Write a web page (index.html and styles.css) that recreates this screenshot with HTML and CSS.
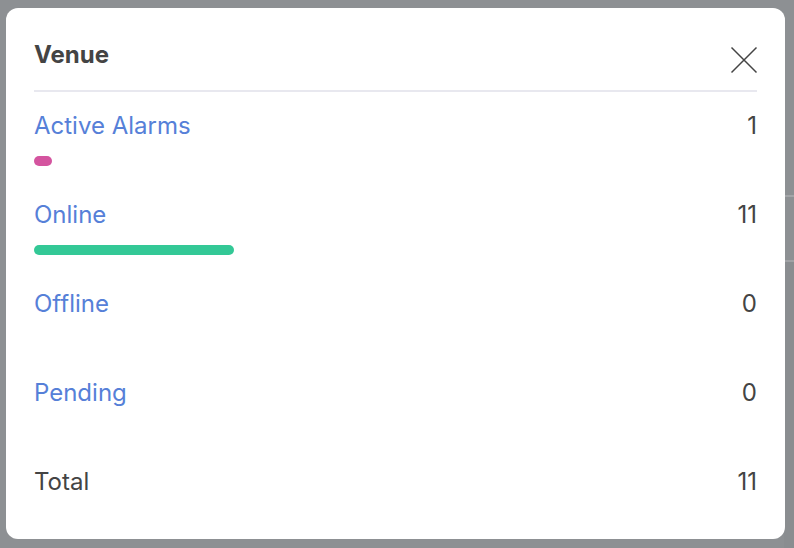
FILE: index.html
```html
<!DOCTYPE html>
<html lang="en">
<head>
<meta charset="utf-8">
<title>Venue</title>
<link rel="stylesheet" href="styles.css">
</head>
<body>
<div class="modal">
  <div class="modal-header">
    <h2 class="modal-title">Venue</h2>
    <button class="close-btn" aria-label="Close">
      <svg width="28" height="28" viewBox="0 0 28 28"><path d="M1.5 1.5 L26.5 26.5 M26.5 1.5 L1.5 26.5" stroke="#444" stroke-width="1.5" fill="none"/></svg>
    </button>
  </div>
  <div class="stat-list">
    <div class="stat">
      <div class="stat-line"><span class="stat-label link">Active Alarms</span><span class="stat-value">1</span></div>
      <div class="bar-track"><div class="bar bar-alarm" style="width:18px"></div></div>
    </div>
    <div class="stat">
      <div class="stat-line"><span class="stat-label link">Online</span><span class="stat-value">11</span></div>
      <div class="bar-track"><div class="bar bar-online" style="width:200px"></div></div>
    </div>
    <div class="stat">
      <div class="stat-line"><span class="stat-label link">Offline</span><span class="stat-value">0</span></div>
      <div class="bar-track"></div>
    </div>
    <div class="stat">
      <div class="stat-line"><span class="stat-label link">Pending</span><span class="stat-value">0</span></div>
      <div class="bar-track"></div>
    </div>
    <div class="stat">
      <div class="stat-line"><span class="stat-label">Total</span><span class="stat-value">11</span></div>
    </div>
  </div>
</div>
</body>
</html>
```
FILE: styles.css
```css
html, body {
  margin: 0;
  padding: 0;
}
body {
  width: 794px;
  height: 548px;
  background-color: #8d9093;
  background-image: linear-gradient(to bottom, #8d9093 0, #8d9093 195px, #a3a5a8 195px, #a3a5a8 197px, #8d9093 197px, #8d9093 260px, #a0a2a5 260px, #a0a2a5 262px, #8a8d90 262px);
  background-size: 10px 100%;
  background-position: right top;
  background-repeat: no-repeat;
  font-family: Inter, "Open Sans", sans-serif;
  color: #444;
  overflow: hidden;
  padding: 8px 0 0 6px;
  box-sizing: border-box;
}
.modal {
  width: 779px;
  height: 531px;
  background: #fff;
  border-radius: 12px;
  padding: 0 28px;
  box-sizing: border-box;
}
.modal-header {
  display: flex;
  justify-content: space-between;
  align-items: flex-start;
  padding: 32px 0 20px;
  border-bottom: 2px solid #e8e8ef;
}
.modal-title {
  margin: 0;
  font-size: 24px;
  line-height: 30px;
  font-weight: 700;
  color: #444;
}
.close-btn {
  border: 0;
  background: none;
  padding: 0;
  margin: 6px -1px -4px 0;
  width: 28px;
  height: 28px;
  display: block;
  cursor: pointer;
}
.close-btn svg { display: block; }
.stat {
  padding: 19px 0 15px;
  height: 89px;
  box-sizing: border-box;
}
.stat-line {
  display: flex;
  justify-content: space-between;
  font-size: 24px;
  line-height: 30px;
  font-weight: 400;
}
.stat-label { color: #444; }
.stat-label.link { color: #5680d8; }
.stat-value { color: #444; }
.bar-track {
  margin-top: 15px;
  height: 10px;
}
.bar {
  height: 10px;
  border-radius: 5px;
}
.bar-alarm { background: #d4549f; }
.bar-online { background: #33c896; }
```
